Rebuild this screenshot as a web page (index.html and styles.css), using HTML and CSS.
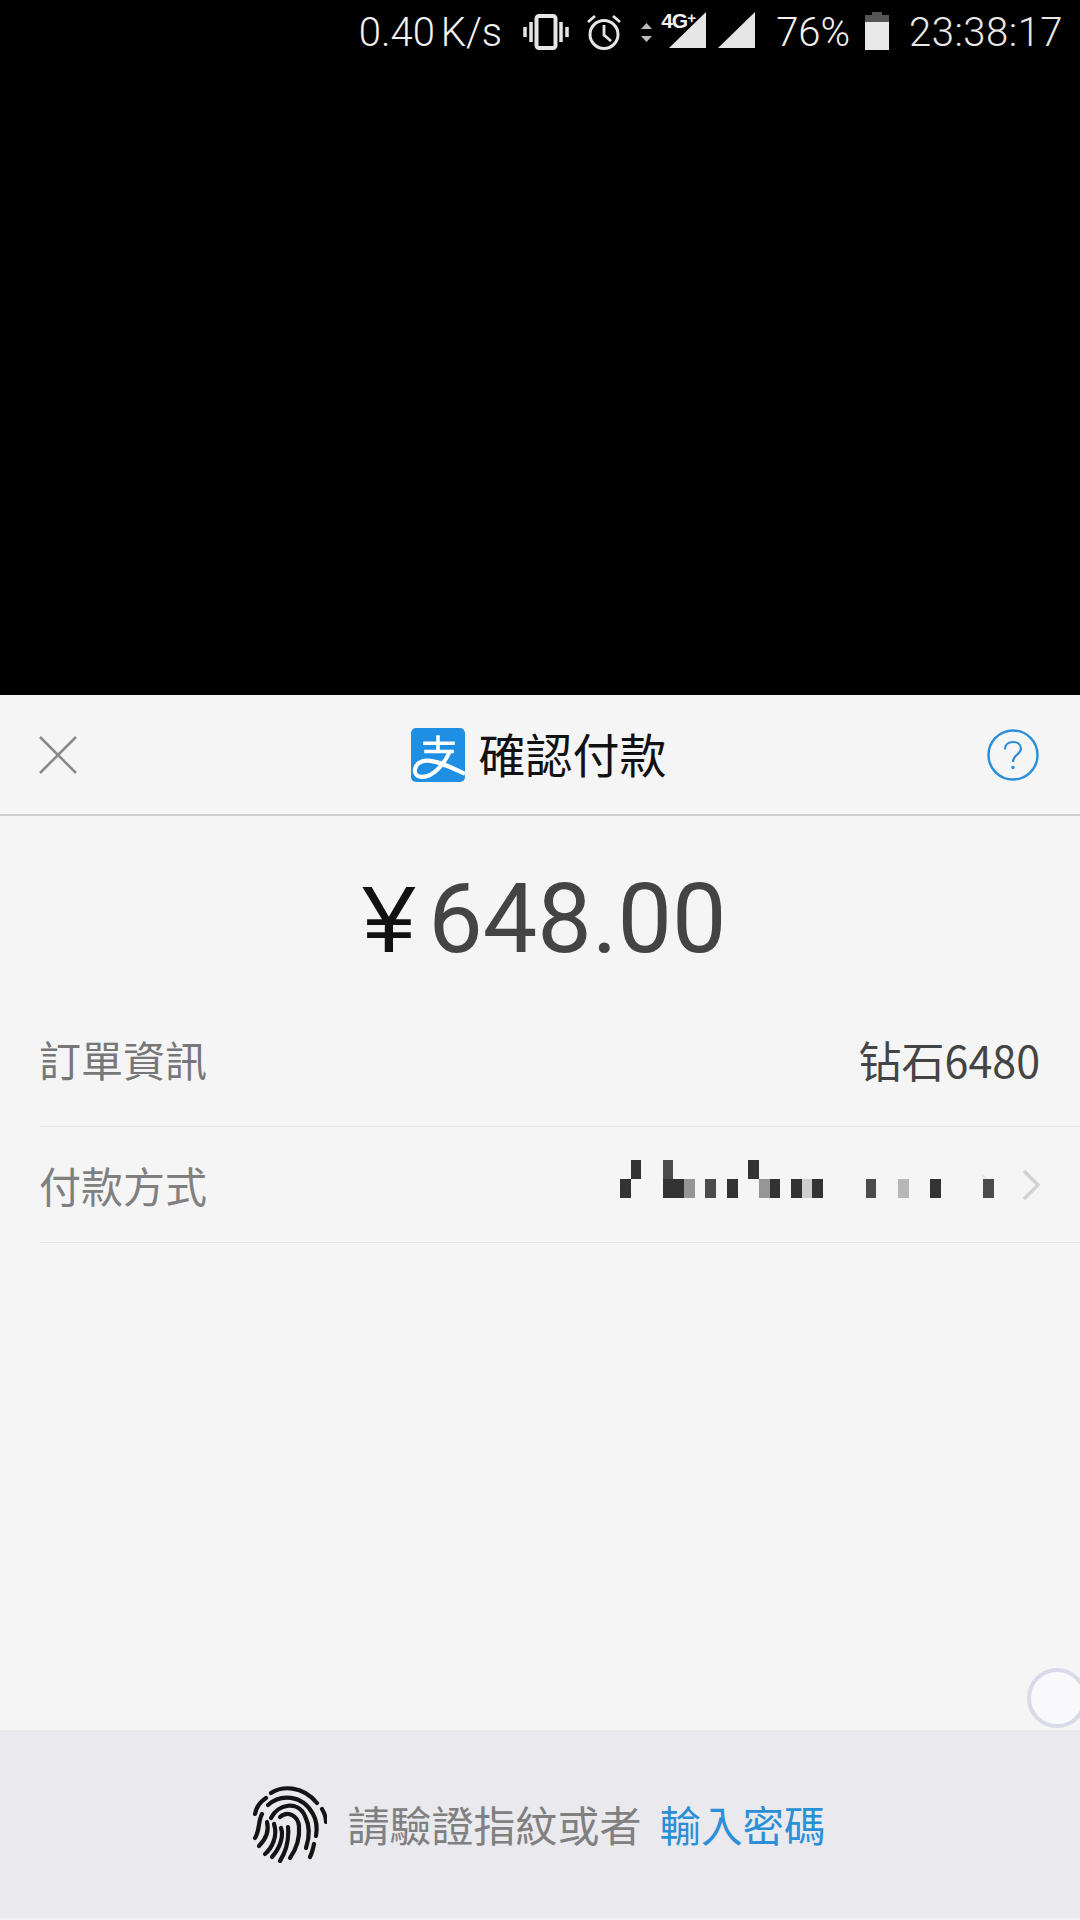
FILE: index.html
```html
<!DOCTYPE html>
<html lang="zh-Hant">
<head>
<meta charset="utf-8">
<title>確認付款</title>
<link rel="stylesheet" href="styles.css">
</head>
<body>
<div class="screen">
  <div class="status">
    <span class="speed">0.40 K/s</span>
    <svg class="ic-vib" viewBox="0 0 46 36"><rect x="13.500" y="2" width="19" height="32" rx="2.500" fill="none" stroke="#e6e6e6" stroke-width="4"/><path d="M8 8v20M2 13v10M38 8v20M44 13v10" stroke="#e6e6e6" stroke-width="3.500" fill="none"/></svg>
    <svg class="ic-alarm" viewBox="0 0 38 36"><circle cx="19" cy="20.500" r="14" fill="none" stroke="#e6e6e6" stroke-width="3"/><path d="M19 11v10l7 6M3 8l7-6M35 8l-7-6" stroke="#e6e6e6" stroke-width="2.800" fill="none"/></svg>
    <div class="net">
      <svg class="ic-arrows" viewBox="0 0 11 19"><path d="M5.500 0L11 6H0zM5.500 19L0 13h11z" fill="#bbb"/></svg>
      <svg class="ic-sig" viewBox="0 0 37 36"><path d="M37 0V36H0z" fill="#e6e6e6"/></svg>
      <span class="fourg">4G<sup>+</sup></span>
    </div>
    <svg class="ic-sig2" viewBox="0 0 37 36"><path d="M37 0V36H0z" fill="#e6e6e6"/></svg>
    <span class="pct">76%</span>
    <svg class="ic-batt" viewBox="0 0 24 38"><path d="M7 0h10v3h7v7H0V3h7z" fill="#555"/><path d="M0 10h24v28H0z" fill="#e8e8e8"/></svg>
    <span class="clock">23:38:17</span>
  </div>

  <div class="sheet">
    <header class="head">
      <svg class="ic-close" viewBox="0 0 38 38"><path d="M1 1l36 36M37 1L1 37" stroke="#8a8a8a" stroke-width="2.600" fill="none"/></svg>
      <div class="title-wrap">
        <svg class="logo" viewBox="0 0 53 53">
          <rect width="53" height="53" rx="5" fill="#1f8fe3"/>
          <path d="M12 15H43M26.500 7V22M13 23H42" stroke="#fff" stroke-width="3.500" fill="none"/>
          <path d="M38 23C33 35 22 48 11 48C5 48 3 44 4 40C5 35 10 32 16 32C26 32 40 39 53 45" stroke="#fff" stroke-width="4" fill="none"/>
        </svg>
        <span class="title">確認付款</span>
      </div>
      <svg class="ic-help" viewBox="0 0 52 52"><circle cx="26" cy="26" r="24.500" fill="none" stroke="#2b8fd8" stroke-width="2.400"/><path d="M18 20.500C18 15.500 21.500 13 26 13C30.500 13 34 15.500 34 19.500C34 25 26 26 26 33" fill="none" stroke="#2b8fd8" stroke-width="2.200"/><circle cx="26" cy="38.500" r="1.700" fill="#2b8fd8"/></svg>
    </header>

    <div class="amount"><span class="yen">¥</span><span class="sum">648.00</span></div>

    <div class="row row-order">
      <span class="label">訂單資訊</span>
      <span class="value">钻石6480</span>
    </div>
    <div class="row row-pay">
      <span class="label label-soft">付款方式</span>
      <div class="mosaic">
        <i></i><i class="d"></i><i></i><i></i><i class="m"></i><i></i><i></i><i></i><i></i><i></i><i></i><i></i><i class="d"></i><i></i><i></i><i></i><i></i><i></i><i></i><i></i><i></i><i></i><i></i><i></i><i></i><i></i><i></i><i></i><i></i><i></i><i></i><i></i><i></i><i></i><i></i>
        <i class="d"></i><i></i><i></i><i></i><i class="d"></i><i class="d"></i><i class="g"></i><i></i><i class="m"></i><i></i><i class="d"></i><i></i><i></i><i class="g"></i><i class="d"></i><i></i><i class="d"></i><i class="l"></i><i class="d"></i><i></i><i></i><i></i><i></i><i class="m"></i><i></i><i></i><i class="k"></i><i></i><i></i><i class="d"></i><i></i><i></i><i></i><i></i><i class="m"></i>
      </div>
      <svg class="chev-faint" viewBox="0 0 18 30"><path d="M2 1l14 14L2 29" fill="none" stroke="#e6e6e6" stroke-width="2.500"/></svg>
      <svg class="chev" viewBox="0 0 18 30"><path d="M2 1l14 14L2 29" fill="none" stroke="#d2d2d2" stroke-width="3.600"/></svg>
    </div>

    <div class="spacer"></div>

    <footer class="foot">
      <svg class="ic-finger" viewBox="0 0 77 77" fill="none" stroke="#141414" stroke-width="4.200" stroke-linecap="round">
        <path d="M21 7C32 0 52 -1 67 17"/>
        <path d="M72 23C75 28 76 32 76 36"/>
        <path d="M16 12C10 16 6 22 5 28"/>
        <path d="M18 19C30 8 52 8 63 28C67 35 67 44 66 50"/>
        <path d="M12 28C8 35 10 44 5 52"/>
        <path d="M21 32C28 18 48 14 55 30C60 40 60 50 56 62"/>
        <path d="M17 36C19 44 16 53 9 60"/>
        <path d="M30 31C38 24 48 30 49 40C50 52 47 62 40 72"/>
        <path d="M24 38C28 50 22 62 15 68"/>
        <path d="M31 42C34 50 30 62 22 71"/>
        <path d="M38 41C39 52 37 64 30 75"/>
        <path d="M64 58C63 63 62 67 60 71"/>
      </svg>
      <span class="hint">請驗證指紋或者</span>
      <span class="pwd">輸入密碼</span>
    </footer>
  </div>

  <div class="float-ball"></div>
</div>
</body>
</html>
```
FILE: styles.css
```css
* { box-sizing: border-box; }
html, body { margin: 0; padding: 0; }
body { background: #000; font-family: "Noto Sans CJK TC", "Noto Sans CJK SC", sans-serif; }
.screen { position: relative; width: 1080px; height: 1920px; overflow: hidden; display: flex; flex-direction: column; background: #000; }

.status { height: 695px; display: flex; align-items: flex-start; color: #f2f2f2; font-family: Roboto, sans-serif; font-size: 40px; line-height: 44px; padding: 11px 17px 0 0; justify-content: flex-end; flex: none; }
.status svg { display: block; flex: none; }
.speed { margin-right: 21px; font-weight: 300; word-spacing: -4px; }
.ic-vib { width: 46px; height: 36px; margin: 3px 16px 0 0; }
.ic-alarm { width: 38px; height: 36px; margin: 3px 18px 0 0; }
.net { position: relative; display: flex; width: 65px; height: 36px; margin: 1px 12px 0 0; }
.ic-arrows { position: absolute; left: 0; top: 11px; width: 11px; height: 19px; }
.ic-sig { position: absolute; left: 28px; top: 0; width: 37px; height: 36px; }
.fourg { position: absolute; left: 20px; top: -1px; font-family: "Liberation Sans Narrow", "Liberation Sans", sans-serif; font-weight: 700; font-size: 21px; line-height: 20px; color: #f2f2f2; letter-spacing: -1px; text-shadow: 1px 0 0 #000; }
.fourg sup { font-size: 15px; line-height: 0; vertical-align: 5px; }
.ic-sig2 { width: 37px; height: 36px; margin: 1px 21px 0 0; }
.pct { margin-right: 15px; font-weight: 300; }
.ic-batt { width: 24px; height: 38px; margin: 1px 20px 0 0; }
.clock { font-weight: 300; color: #e8e8e8; letter-spacing: 0.5px; }

.sheet { flex: 1; display: flex; flex-direction: column; background: #f5f5f6; }
.head { height: 121px; flex: none; display: flex; align-items: center; justify-content: space-between; padding: 0 41px 0 39px; border-bottom: 2px solid #d0d0d0; }
.ic-close { width: 38px; height: 38px; display: block; }
.ic-help { width: 52px; height: 52px; display: block; }
.title-wrap { display: flex; align-items: center; gap: 14px; margin-left: 13px; }
.logo { width: 54px; height: 54px; display: block; }
.title { font-size: 47px; line-height: 54px; color: #111; font-weight: 400; margin-bottom: 3px; }

.amount { display: flex; justify-content: center; align-items: baseline; height: 190px; padding: 51px 0 0 9px; flex: none; line-height: 104px; }
.yen { font-family: "Liberation Sans", sans-serif; font-size: 95px; color: #111; margin-right: 13px; }
.sum { font-family: Roboto, sans-serif; font-weight: 400; font-size: 97px; color: #444; }

.row { position: relative; margin-left: 40px; display: flex; align-items: center; justify-content: space-between; border-bottom: 1px solid #e6e6e6; flex: none; padding-right: 40px; }
.row-order { height: 121px; padding-bottom: 14px; }
.row-pay { height: 116px; }
.label { font-size: 42px; line-height: 50px; color: #777; margin-left: -1px; }
.label-soft { color: #808080; }
.value { font-size: 43px; line-height: 50px; color: #444; font-family: "Noto Sans CJK SC", sans-serif; }
.mosaic { position: relative; z-index: 1; display: grid; grid-template-columns: repeat(35, 10.700px); grid-auto-rows: 19px; margin: 0 28px 12px auto; }
.mosaic .d { background: #333; }
.mosaic .m { background: #4b4b4b; }
.mosaic .g { background: #969696; }
.mosaic .l { background: #cdcdcd; }
.mosaic .k { background: #b6b6b6; }
.chev { width: 18px; height: 30px; display: block; }
.chev-faint { position: absolute; right: 87px; top: 42px; width: 12px; height: 30px; }

.spacer { flex: 1; }
.foot { flex: none; height: 190px; display: flex; align-items: center; justify-content: center; padding-right: 4px; background: #e9e9ee; border-bottom: 2px solid #f2f2f4; }
.ic-finger { width: 77px; height: 77px; display: block; margin-right: 20px; }
.hint { font-size: 42px; line-height: 50px; color: #808080; margin-right: 18px; }
.pwd { font-size: 41.500px; line-height: 50px; color: #2b8fd8; }

.float-ball { position: absolute; left: 1027px; top: 1668px; width: 60px; height: 60px; border-radius: 50%; background: #f9f9fb; border: 4px solid #d8dae9; filter: blur(0.600px); }
```
